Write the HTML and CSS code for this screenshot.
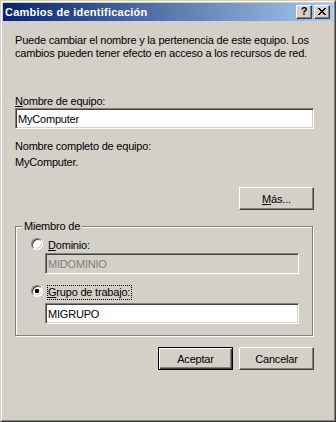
FILE: index.html
```
<!DOCTYPE html>
<html lang="es">
<head>
<meta charset="utf-8">
<title>Cambios de identificación</title>
<link rel="stylesheet" href="styles.css">
</head>
<body>
<div class="window">
  <div class="frame">
    <div class="titlebar">
      <span class="title">Cambios de identificación</span>
      <div class="caption-buttons">
        <span class="cap-btn help">?</span>
        <span class="cap-btn close"><svg width="8" height="7" viewBox="0 0 8 7" shape-rendering="crispEdges"><path d="M0 0h2v1h-2zM6 0h2v1h-2zM1 1h2v1h-2zM5 1h2v1h-2zM2 2h4v1h-4zM3 3h2v1h-2zM2 4h4v1h-4zM1 5h2v1h-2zM5 5h2v1h-2zM0 6h2v1h-2zM6 6h2v1h-2z" fill="#000"/></svg></span>
      </div>
    </div>
    <div class="content">
      <p class="intro">Puede cambiar el nombre y la pertenencia de este equipo. Los<br>cambios pueden tener efecto en acceso a los recursos de red.</p>
      <label class="name-lbl" for="pc"><u>N</u>ombre de equipo:</label>
      <input id="pc" class="field" type="text" value="MyComputer">
      <div class="full-lbl">Nombre completo de equipo:</div>
      <div class="full-val">MyComputer.</div>
      <div class="more-row"><button class="btn" type="button"><u>M</u>ás...</button></div>
      <div class="group">
        <span class="legend">Miembro de</span>
        <div class="opt">
          <input type="radio" class="radio" name="m" id="dom">
          <label for="dom" class="opt-lbl"><u>D</u>ominio:</label>
        </div>
        <input class="field sub" type="text" value="MIDOMINIO" disabled>
        <div class="opt opt2">
          <input type="radio" class="radio" name="m" id="wg" checked>
          <label for="wg" class="opt-lbl focus"><u>G</u>rupo de trabajo:</label>
        </div>
        <input class="field sub sub2" type="text" value="MIGRUPO">
      </div>
      <div class="actions">
        <button class="btn default" type="button">Aceptar</button>
        <button class="btn" type="button">Cancelar</button>
      </div>
    </div>
  </div>
</div>
</body>
</html>
```
FILE: styles.css
```
* { box-sizing: border-box; }
html, body { margin: 0; padding: 0; background: #D4D0C8; }
body {
  font-family: "Liberation Sans", Arial, sans-serif;
  font-size: 11px;
  letter-spacing: -0.2px;
  color: #000;
}
.window {
  width: 336px;
  height: 422px;
  border: 1px solid;
  border-color: #D4D0C8 #404040 #404040 #D4D0C8;
}
.frame {
  height: 100%;
  border: 1px solid;
  border-color: #FFFFFF #808080 #808080 #FFFFFF;
  padding: 1px;
  background: #D4D0C8;
}
.titlebar {
  height: 18px;
  display: flex;
  align-items: center;
  justify-content: space-between;
  padding: 0 3px 0 2px;
  background: linear-gradient(to right, #0A246A, #A6CAF0);
}
.title {
  color: #fff;
  font-weight: bold;
  line-height: 13px;
  letter-spacing: 0.25px;
  white-space: nowrap;
}
.caption-buttons { display: flex; gap: 2px; }
.cap-btn {
  width: 16px;
  height: 14px;
  display: flex;
  align-items: center;
  justify-content: center;
  background: #D4D0C8;
  border: 1px solid;
  border-color: #FFFFFF #404040 #404040 #FFFFFF;
  box-shadow: inset -1px -1px 0 #808080;
}
.help {
  font-weight: bold;
  font-size: 11px;
  line-height: 11px;
  letter-spacing: 0;
  padding-bottom: 1px;
}
.close svg { display: block; margin-bottom: 1px; }
.content {
  padding: 13px 19px 0 12px;
}
.intro {
  margin: 0;
  line-height: 13px;
  white-space: nowrap;
}
.name-lbl {
  display: block;
  margin-top: 35px;
  line-height: 13px;
}
.field {
  display: block;
  width: 299px;
  height: 21px;
  margin: 0;
  padding: 0 2px;
  font: inherit;
  letter-spacing: inherit;
  color: #000;
  background: #fff;
  border: 1px solid;
  border-color: #808080 #FFFFFF #FFFFFF #808080;
  box-shadow: inset 1px 1px 0 #404040, inset -1px -1px 0 #D4D0C8;
  border-radius: 0;
  outline: none;
}
.field:disabled {
  background: #D4D0C8;
  color: #808080;
  -webkit-text-fill-color: #808080;
  opacity: 1;
}
.full-lbl { margin-top: 11px; line-height: 13px; }
.full-val { margin-top: 3px; line-height: 13px; }
.more-row {
  display: flex;
  justify-content: flex-end;
  margin-top: 18px;
}
.btn {
  width: 75px;
  height: 23px;
  margin: 0;
  padding: 0;
  font: inherit;
  letter-spacing: inherit;
  color: #000;
  background: #D4D0C8;
  border: 1px solid;
  border-color: #FFFFFF #404040 #404040 #FFFFFF;
  box-shadow: inset -1px -1px 0 #808080;
  border-radius: 0;
}
.btn.default {
  border-color: #000;
  box-shadow: inset 1px 1px 0 #FFFFFF, inset -1px -1px 0 #404040, inset -2px -2px 0 #808080;
}
.group {
  position: relative;
  width: 298px;
  margin-top: 16px;
  padding: 11px 0 11px 15px;
  border: 1px solid #808080;
  box-shadow: inset 1px 1px 0 #FFFFFF, 1px 1px 0 #FFFFFF;
}
.legend {
  position: absolute;
  top: -7px;
  left: 6px;
  padding: 0 2px;
  line-height: 13px;
  background: #D4D0C8;
}
.opt {
  display: flex;
  align-items: flex-start;
  height: 15px;
}
.opt2 { margin-top: 11px; }
.radio {
  appearance: none;
  -webkit-appearance: none;
  width: 12px;
  height: 12px;
  margin: 0 4px 0 0;
  border-radius: 50%;
  border: 1px solid;
  border-color: #808080 #FFFFFF #FFFFFF #808080;
  background: #fff;
  box-shadow: inset 1px 1px 0 #404040, inset -1px -1px 0 #D4D0C8;
  outline: none;
}
.radio:checked {
  background: radial-gradient(circle, #000 0, #000 2px, #fff 2.6px);
}
.opt-lbl {
  display: block;
  line-height: 13px;
  border: 1px solid transparent;
  padding-right: 1px;
}
.opt-lbl.focus { border: 1px dotted #000; }
.sub {
  width: 254px;
  margin-left: 14px;
}
.sub2 { margin-top: 3px; }
.actions {
  display: flex;
  justify-content: flex-end;
  gap: 6px;
  margin-top: 11px;
}
```
